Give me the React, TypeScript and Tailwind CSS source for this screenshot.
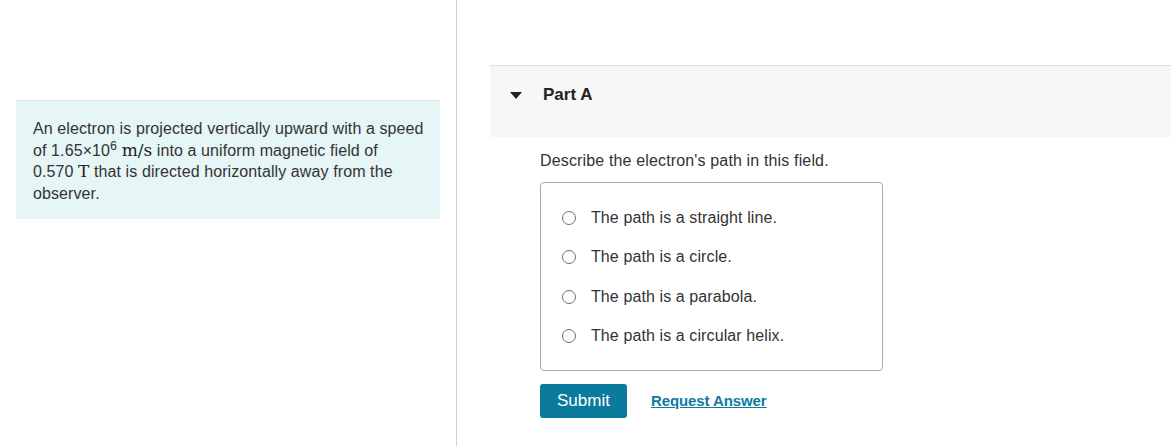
import React from "react";

const options = [
  "The path is a straight line.",
  "The path is a circle.",
  "The path is a parabola.",
  "The path is a circular helix.",
];

const Math: React.FC<{ children: React.ReactNode }> = ({ children }) => (
  <span className="font-['DejaVu_Serif','Liberation_Serif',serif] text-[17px] leading-none tracking-normal text-[#222]">
    {children}
  </span>
);

export default function App() {
  return (
    <div className="flex h-[446px] w-[1171px] bg-white font-['Liberation_Sans',Arial,sans-serif] text-[#333]">
      <div className="w-[457px] shrink-0 border-r border-[#c9d3dd] pt-[100px] pl-[16px] pr-[16px]">
        <div className="w-[424px] border-t border-[#d6e4e8] bg-[#e6f5f6] pl-[17px] pr-[10px] pt-[17px] pb-[15px] text-[16px] leading-[21.5px] tracking-[0.1px]">
          An electron is projected vertically upward with a speed of 1.65×10
          <span className="relative -top-[6px] text-[12.5px] leading-none">6</span>{" "}
          <Math>m/s</Math> into a uniform magnetic field of{" "}
          <span className="whitespace-nowrap">
            0.570 <Math>T</Math>
          </span>{" "}
          that is directed horizontally away from the observer.
        </div>
      </div>
      <div className="flex-1 pl-[33px] pt-[65px]">
        <div className="flex h-[72px] items-start border-t border-[#dedede] bg-[#f7f7f7] pl-[20px] pt-[19px]">
          <svg width="12" height="8" viewBox="0 0 12 8" className="mt-[7px]">
            <polygon points="0,0 12,0 6,7" fill="#222" />
          </svg>
          <span className="ml-[21px] text-[17px] font-bold leading-[20px] text-[#222]">
            Part A
          </span>
        </div>
        <div className="pl-[50px]">
          <p className="mt-[14px] text-[16px] leading-[20px] tracking-[0.15px]">
            Describe the electron's path in this field.
          </p>
          <div className="mt-[11px] w-[343px] rounded-[4px] border border-[#a9a9a9] pt-[15px] pb-[14px]">
            {options.map((o) => (
              <label key={o} className="flex h-[39.5px] items-center pl-[21px]">
                <span className="h-[14px] w-[14px] rounded-full border border-[#707070] bg-white" />
                <span className="ml-[15px] text-[16px] tracking-[0.1px]">{o}</span>
              </label>
            ))}
          </div>
          <div className="mt-[13px] flex items-center">
            <button className="h-[34px] w-[87px] rounded-[3px] bg-[#0a7b9c] text-[17px] text-white">
              Submit
            </button>
            <a className="ml-[24px] text-[15px] font-bold tracking-[-0.1px] text-[#0b7ba0] underline">
              Request Answer
            </a>
          </div>
        </div>
      </div>
    </div>
  );
}
